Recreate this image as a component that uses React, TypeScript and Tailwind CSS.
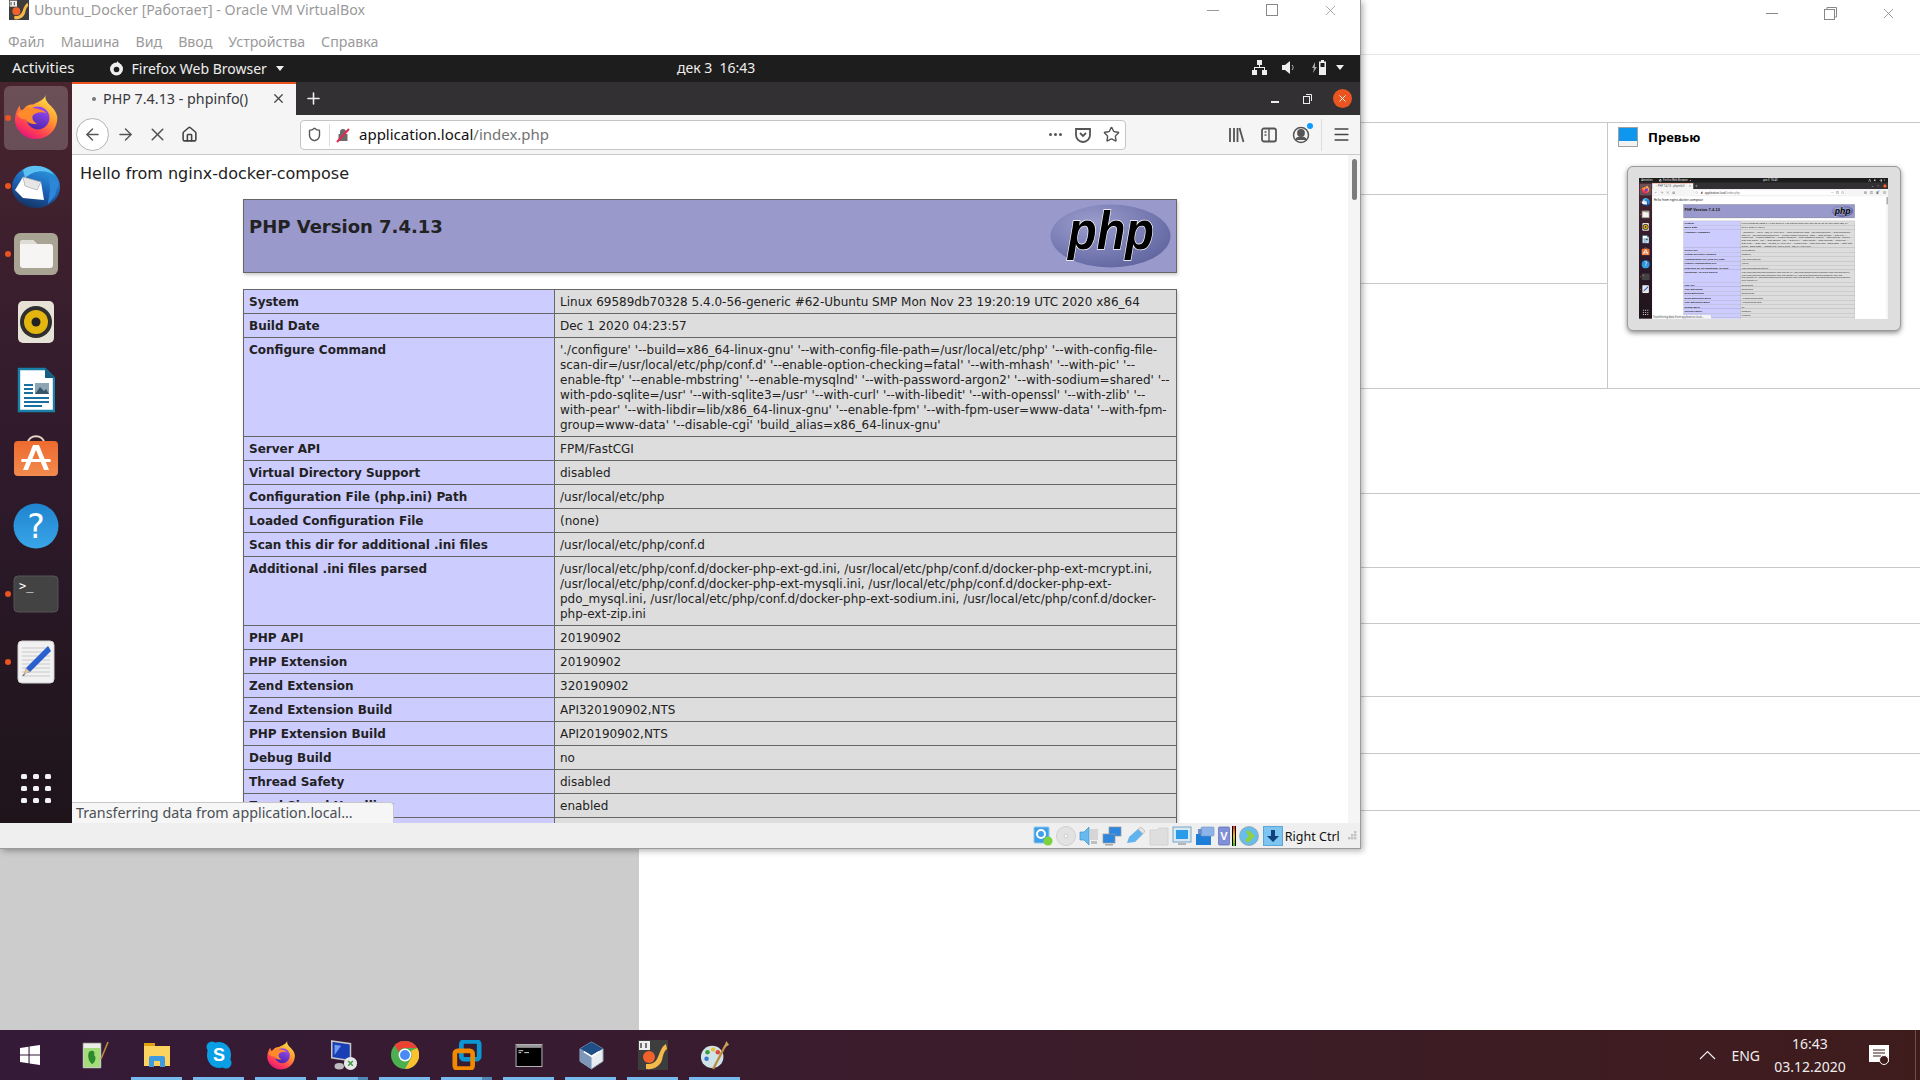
import React from 'react';
import { ArrowLeft, ArrowRight, House, Menu, Plus, Shield, Star, X } from 'lucide-react';

const phpRows: [string, string][] = [
  ['System', 'Linux 69589db70328 5.4.0-56-generic #62-Ubuntu SMP Mon Nov 23 19:20:19 UTC 2020 x86_64'],
  ['Build Date', 'Dec 1 2020 04:23:57'],
  [
    'Configure Command',
    "'./configure' '--build=x86_64-linux-gnu' '--with-config-file-path=/usr/local/etc/php' '--with-config-file-scan-dir=/usr/local/etc/php/conf.d' '--enable-option-checking=fatal' '--with-mhash' '--with-pic' '--enable-ftp' '--enable-mbstring' '--enable-mysqlnd' '--with-password-argon2' '--with-sodium=shared' '--with-pdo-sqlite=/usr' '--with-sqlite3=/usr' '--with-curl' '--with-libedit' '--with-openssl' '--with-zlib' '--with-pear' '--with-libdir=lib/x86_64-linux-gnu' '--enable-fpm' '--with-fpm-user=www-data' '--with-fpm-group=www-data' '--disable-cgi' 'build_alias=x86_64-linux-gnu'",
  ],
  ['Server API', 'FPM/FastCGI'],
  ['Virtual Directory Support', 'disabled'],
  ['Configuration File (php.ini) Path', '/usr/local/etc/php'],
  ['Loaded Configuration File', '(none)'],
  ['Scan this dir for additional .ini files', '/usr/local/etc/php/conf.d'],
  [
    'Additional .ini files parsed',
    '/usr/local/etc/php/conf.d/docker-php-ext-gd.ini, /usr/local/etc/php/conf.d/docker-php-ext-mcrypt.ini, /usr/local/etc/php/conf.d/docker-php-ext-mysqli.ini, /usr/local/etc/php/conf.d/docker-php-ext-pdo_mysql.ini, /usr/local/etc/php/conf.d/docker-php-ext-sodium.ini, /usr/local/etc/php/conf.d/docker-php-ext-zip.ini',
  ],
  ['PHP API', '20190902'],
  ['PHP Extension', '20190902'],
  ['Zend Extension', '320190902'],
  ['Zend Extension Build', 'API320190902,NTS'],
  ['PHP Extension Build', 'API20190902,NTS'],
  ['Debug Build', 'no'],
  ['Thread Safety', 'disabled'],
  ['Zend Signal Handling', 'enabled'],
  ['Zend Memory Manager', 'enabled'],
];

const Firefox = ({ size = 46 }: { size?: number }) => (
  <svg width={size} height={size} viewBox="0 0 48 48">
    <defs>
      <linearGradient id="ffBody" x1="0.8" y1="0.05" x2="0.25" y2="1">
        <stop offset="0" stopColor="#ffe34a" />
        <stop offset="0.38" stopColor="#ff9a2e" />
        <stop offset="0.75" stopColor="#ff3d55" />
        <stop offset="1" stopColor="#e0127f" />
      </linearGradient>
      <linearGradient id="ffGlobe" x1="0.7" y1="0" x2="0.3" y2="1">
        <stop offset="0" stopColor="#9a4cf5" />
        <stop offset="1" stopColor="#4b23a8" />
      </linearGradient>
    </defs>
    <path
      d="M34 1C33 6 36 9 40 13C45 18 47 23 46 28C45 38 36 47 24 47C12 47 2 37 2 27C2 21 4 16 7 12C7 15 8 17 10 18C12 13 16 11 21 11C26 8 32 7 34 1Z"
      fill="url(#ffBody)"
    />
    <circle cx="26" cy="25" r="12" fill="url(#ffGlobe)" />
    <path
      d="M4 21C9 15 17 14 24 15C30 16 33 18 35 20C30 18 24 19 21 22C19 25 21 29 25 31C20 32 15 30 13 26C10 27 7 25 4 21Z"
      fill="#ff8a2b"
    />
  </svg>
);

const Thunderbird = () => (
  <svg className="-mt-[2px]" width="50" height="50" viewBox="0 0 50 50">
    <defs>
      <linearGradient id="tbBody" x1="0.7" y1="0" x2="0.3" y2="1">
        <stop offset="0" stopColor="#2c9be0" />
        <stop offset="0.55" stopColor="#1b5fb4" />
        <stop offset="1" stopColor="#14315f" />
      </linearGradient>
    </defs>
    <ellipse cx="25" cy="27" rx="24" ry="21" fill="url(#tbBody)" />
    <path d="M12 10C20 3 36 5 43 15C36 10 24 9 14 18Z" fill="#5cc0f2" />
    <path d="M4 30L12 17L30 22L33 40L12 38Z" fill="#fff" />
    <path d="M12 17L30 22L26 30L14 26Z" fill="#e6e6e6" stroke="#9a9a9a" strokeWidth="0.6" />
    <path d="M38 16L48 22L44 36L37 44L39 30Z" fill="#2e86d6" />
  </svg>
);

const FilesIcon = () => (
  <svg width="46" height="46" viewBox="0 0 46 46">
    <rect x="1" y="2" width="44" height="42" rx="6" fill="#a8a392" />
    <path d="M7 12a3 3 0 0 1 3-3h10l4 4h13a3 3 0 0 1 3 3v18a3 3 0 0 1-3 3H10a3 3 0 0 1-3-3Z" fill="#f6f5f3" />
    <path d="M7 13a3 3 0 0 1 3-4h10l4 4Z" fill="#dfdcd5" />
  </svg>
);

const Rhythmbox = () => (
  <svg width="38" height="46" viewBox="0 0 38 46">
    <rect x="1" y="2" width="36" height="42" rx="5" fill="#e6e2d6" />
    <circle cx="19" cy="23" r="16" fill="#2f2f2f" />
    <circle cx="19" cy="23" r="12" fill="#e2b50f" />
    <circle cx="19" cy="23" r="4.5" fill="#222" />
  </svg>
);

const Writer = () => (
  <svg width="38" height="46" viewBox="0 0 38 46">
    <path d="M2 2H28L37 11V44H2Z" fill="#fff" stroke="#1a80a8" strokeWidth="2.4" />
    <path d="M28 1V11H38Z" fill="#155f82" />
    <rect x="7" y="17" width="9" height="2" fill="#186fa0" />
    <rect x="7" y="21" width="9" height="2" fill="#186fa0" />
    <rect x="7" y="25" width="9" height="2" fill="#186fa0" />
    <rect x="18" y="16" width="14" height="11" fill="#8da6b6" />
    <path d="M18 27L23 20L27 24L29 22L32 27Z" fill="#3a5566" />
    <rect x="7" y="30" width="25" height="2" fill="#186fa0" />
    <rect x="7" y="34" width="25" height="2" fill="#186fa0" />
    <rect x="7" y="38" width="18" height="2" fill="#186fa0" />
  </svg>
);

const SoftwareIcon = () => (
  <svg className="-mt-[6px]" width="46" height="46" viewBox="0 0 46 46">
    <defs>
      <linearGradient id="swBag" x1="0" y1="0" x2="0" y2="1">
        <stop offset="0" stopColor="#ee6a2e" />
        <stop offset="1" stopColor="#f28a4e" />
      </linearGradient>
    </defs>
    <path d="M15 11C15 2 31 2 31 11" fill="none" stroke="#e9d6c6" strokeWidth="2" />
    <rect x="1" y="9" width="44" height="35" rx="4" fill="url(#swBag)" />
    <path d="M20 13H26L36 38H31L23 18L15 38H10Z" fill="#fff" />
    <rect x="8" y="27" width="30" height="3" rx="1.5" fill="#fff" />
  </svg>
);

const HelpIcon = () => (
  <svg width="46" height="46" viewBox="0 0 46 46">
    <defs>
      <linearGradient id="helpBg" x1="0" y1="0" x2="0" y2="1">
        <stop offset="0" stopColor="#1f83cf" />
        <stop offset="1" stopColor="#3aa6e8" />
      </linearGradient>
    </defs>
    <circle cx="23" cy="23" r="22.5" fill="url(#helpBg)" />
    <text x="23" y="35" textAnchor="middle" fontFamily="'DejaVu Sans',sans-serif" fontSize="33" fill="#fff">
      ?
    </text>
  </svg>
);

const TerminalIcon = () => (
  <svg width="46" height="38" viewBox="0 0 46 38">
    <rect x="1" y="1" width="44" height="36" rx="4" fill="#434343" stroke="#555" />
    <text x="6" y="15" fontFamily="'DejaVu Sans Mono',monospace" fontSize="12" fill="#fff">
      &gt;_
    </text>
  </svg>
);

const Gedit = () => (
  <svg width="38" height="46" viewBox="0 0 38 46">
    <rect x="1" y="2" width="36" height="42" rx="4" fill="#f1f1f1" stroke="#d0d0d0" />
    <g stroke="#c9c9c9" strokeWidth="1">
      <path d="M5 9H33M5 13H33M5 17H33M5 21H33M5 25H33M5 29H33M5 33H33M5 37H33" />
    </g>
    <path d="M31 7L34 12L13 33L7 35L9 29Z" fill="#2a5fd0" />
    <path d="M9 29L13 33L7 35Z" fill="#e6c28c" />
    <path d="M5 37L7 35L8 36Z" fill="#222" />
  </svg>
);

const AppGrid = () => (
  <div className="grid grid-cols-3 gap-x-[6px] gap-y-[7px]">
    {Array.from({ length: 9 }).map((_, i) => (
      <span key={i} className="w-[6px] h-[5px] rounded-[1.5px] bg-[#f2f2f2]" />
    ))}
  </div>
);

const WinLogo = () => (
  <svg width="20" height="20" viewBox="0 0 20 20" fill="#fff">
    <path d="M0 3L8.5 1.8V9.4H0ZM9.6 1.6L20 0V9.4H9.6ZM0 10.6H8.5V18.2L0 17ZM9.6 10.6H20V20L9.6 18.4Z" />
  </svg>
);

const NotepadPP = () => (
  <svg width="28" height="28" viewBox="0 0 28 28">
    <path d="M2 2H20V27H2Z" fill="#e9efe4" stroke="#888" strokeWidth="0.7" />
    <path d="M3 7H19V26H3Z" fill="#a5dc7a" />
    <path d="M8 11C11 8 15 11 13 14C16 16 14 22 11 23C8 21 6 15 8 11Z" fill="#2c8a2c" />
    <path d="M20 18L27 1" stroke="#b98b3a" strokeWidth="1.6" />
  </svg>
);

const FolderIcon = () => (
  <svg width="28" height="24" viewBox="0 0 28 24">
    <path d="M1 0H12V4H1Z" fill="#e0a110" />
    <rect x="1" y="3" width="26" height="20" fill="#fbd35e" />
    <path d="M6 24V15a2 2 0 0 1 2-2H20a2 2 0 0 1 2 2V24H17V18H11V24Z" fill="#3f9be0" />
  </svg>
);

const SkypeIcon = () => (
  <svg width="26" height="28" viewBox="0 0 26 28">
    <ellipse cx="13" cy="14" rx="12" ry="13" fill="#0a9ee5" />
    <circle cx="6" cy="6" r="5.5" fill="#0a9ee5" />
    <circle cx="20" cy="22" r="5.5" fill="#0a9ee5" />
    <text x="13" y="20" textAnchor="middle" fontFamily="'Liberation Sans',sans-serif" fontWeight="700" fontSize="18" fill="#fff">
      S
    </text>
  </svg>
);

const RdpIcon = () => (
  <svg width="30" height="30" viewBox="0 0 32 32">
    <path d="M4 1L24 4V22L4 19Z" fill="#1a3fb5" stroke="#c8c8c8" strokeWidth="1.6" />
    <path d="M7 5L14 6L7 16Z" fill="#6f9df0" />
    <circle cx="24" cy="25" r="7" fill="#e8e8e8" />
    <ellipse cx="12" cy="28" rx="5" ry="3.5" fill="#bdbdbd" />
    <path d="M21.5 22.5L26.5 27.5M26.5 22.5L21.5 27.5" stroke="#3f9b3f" strokeWidth="1.6" />
  </svg>
);

const ChromeIcon = () => (
  <svg width="28" height="28" viewBox="0 0 48 48">
    <circle cx="24" cy="24" r="24" fill="#4caf50" />
    <path d="M24 0A24 24 0 0 1 45 12H24A12 12 0 0 0 13 19L6 7A24 24 0 0 1 24 0Z" fill="#ea4335" />
    <path d="M45 12A24 24 0 0 1 24 48L34 30A12 12 0 0 0 34 17Z" fill="#fbc02d" />
    <circle cx="24" cy="24" r="11" fill="#fff" />
    <circle cx="24" cy="24" r="8.5" fill="#4a8af4" />
  </svg>
);

const VmwareIcon = () => (
  <svg width="30" height="30" viewBox="0 0 30 32" fill="none">
    <rect x="9" y="1.5" width="19" height="19" rx="3" stroke="#0c97d2" strokeWidth="5" />
    <rect x="2" y="11.5" width="19" height="19" rx="3" stroke="#ef8a00" strokeWidth="5" />
  </svg>
);

const CmdIcon = () => (
  <svg width="28" height="23" viewBox="0 0 28 24">
    <rect x="0.5" y="0.5" width="27" height="23" fill="#000" stroke="#bbb" />
    <rect x="1" y="1" width="26" height="3" fill="#9a9a9a" />
    <path d="M3 7H8M3 9H6M9 9H14" stroke="#ddd" strokeWidth="1" />
  </svg>
);

const VBoxCube = () => (
  <svg width="25" height="29" viewBox="0 0 26 30">
    <path d="M13 1L25 8V21L13 29L1 21V8Z" fill="#e9edf2" stroke="#8ea1b7" />
    <path d="M13 1L25 8L13 15L1 8Z" fill="#1f4f86" />
    <path d="M13 15V29L1 21V8Z" fill="#7d97b8" />
    <path d="M5 11L13 16L21 11" stroke="#fff" strokeWidth="1.6" fill="none" />
  </svg>
);

const VBoxApp = ({ size = 30 }: { size?: number }) => (
  <svg width={size} height={size} viewBox="0 0 30 30">
    <rect width="30" height="30" fill="#3d3d3d" />
    <rect x="1" y="1" width="11" height="9" fill="#eee" />
    <path d="M3 8V3M8 8V3" stroke="#222" strokeWidth="1.2" />
    <circle cx="11" cy="17" r="6" fill="#f0622a" />
    <path d="M28 4C22 8 22 14 19 19C16 24 12 24 8 24V29C16 30 22 26 24 20C25 15 26 11 29 9Z" fill="#f7b84a" />
  </svg>
);

const PaletteIcon = () => (
  <svg width="30" height="30" viewBox="0 0 32 32">
    <ellipse cx="13" cy="18" rx="12" ry="12" fill="#cfe3e8" />
    <circle cx="8" cy="13" r="2.4" fill="#3f9b3f" />
    <circle cx="14" cy="10" r="2.4" fill="#e8c33a" />
    <circle cx="7" cy="20" r="2.4" fill="#3a78d0" />
    <circle cx="19" cy="13" r="2.4" fill="#d9483a" />
    <path d="M14 31L27 6" stroke="#b98b3a" strokeWidth="2.4" />
    <path d="M25 9L28 1L31 5Z" fill="#c9a35a" />
  </svg>
);

const PhpLogo = () => (
  <svg width="121" height="64" viewBox="0 0 121 64">
    <defs>
      <radialGradient id="phpOval" cx="0.35" cy="0.3" r="0.85">
        <stop offset="0" stopColor="#9a9dcc" />
        <stop offset="0.6" stopColor="#7478b0" />
        <stop offset="1" stopColor="#5b5f9a" />
      </radialGradient>
    </defs>
    <ellipse cx="60.5" cy="32" rx="60" ry="31.5" fill="url(#phpOval)" />
    <text
      x="61"
      y="45"
      textAnchor="middle"
      textLength="86"
      lengthAdjust="spacingAndGlyphs"
      fontFamily="'Liberation Sans',sans-serif"
      fontWeight="700"
      fontStyle="italic"
      fontSize="54"
      fill="#000"
      stroke="#fff"
      strokeWidth="1.4"
      paintOrder="stroke"
    >
      php
    </text>
  </svg>
);

const SlashedLock = () => (
  <svg width="16" height="16" viewBox="0 0 16 16">
    <path d="M5 7V5a3 3 0 0 1 6 0v2h1.5v7h-9V7Z" fill="#6a6a6a" />
    <path d="M2 15L14 2" stroke="#e22850" strokeWidth="2" />
  </svg>
);

const ToolGlyph = ({ children }: { children: React.ReactNode }) => (
  <svg width="18" height="18" viewBox="0 0 18 18" fill="none" stroke="#555" strokeWidth="1.8">
    {children}
  </svg>
);

const DockItem = ({ running, active, children }: { running?: boolean; active?: boolean; children: React.ReactNode }) => (
  <div className="relative h-[68px] flex items-center justify-center">
    {active && <div className="absolute left-1 right-1 top-[2px] bottom-[2px] rounded-md bg-white/20" />}
    {running && <span className="absolute left-[5px] top-1/2 -mt-[3px] w-[6px] h-[6px] rounded-full bg-[#e95420]" />}
    <div className="relative flex">{children}</div>
  </div>
);

const PhpInfoPage = () => (
  <div className="relative flex-1 flex min-h-0 bg-white font-['DejaVu_Sans',sans-serif] text-[#222]">
    <div className="flex-1 min-w-0 overflow-hidden">
      <p className="pl-2 pt-[9px] text-[16px] leading-[19px] text-[#222]">Hello from nginx-docker-compose</p>
      <div className="mx-auto mt-[16px] w-[934px] h-[74px] flex justify-between border border-[#666] bg-[#9999cc] shadow-[1px_2px_3px_#ccc]">
        <h1 className="pl-[5px] pt-[16px] text-[18px] leading-[22px] font-bold text-[#222]">PHP Version 7.4.13</h1>
        <div className="pt-[4px] pr-[5px]">
          <PhpLogo />
        </div>
      </div>
      <table className="ml-[171px] mt-[16px] w-[933px] table-fixed border-collapse shadow-[1px_2px_3px_#ccc] text-[12px] leading-[15px]">
        <colgroup>
          <col className="w-[311px]" />
          <col className="w-[622px]" />
        </colgroup>
        <tbody>
          {phpRows.map(([name, value]) => (
            <tr key={name}>
              <td className="align-top border border-[#666] bg-[#ccccff] pl-[5px] pr-[5px] pt-[5px] pb-[3px] font-bold">{name}</td>
              <td className="align-top border border-[#666] bg-[#dddddd] pl-[5px] pr-[5px] pt-[5px] pb-[3px] break-words">{value}</td>
            </tr>
          ))}
        </tbody>
      </table>
    </div>
    <div className="w-[12px] bg-[#f5f5f5] flex justify-center pt-[4px]">
      <span className="block w-[5px] h-[41px] rounded-full bg-[#7c7c7c]" />
    </div>
    <div className="absolute left-0 bottom-0 w-[322px] h-[21px] rounded-tr-[4px] border-t border-r border-[#c8c8c8] bg-[#f6f6f6] pl-[4px] font-['Noto_Sans',sans-serif] text-[14.3px] leading-[19px] text-[#4a4f55] whitespace-nowrap">
      Transferring data from application.local…
    </div>
  </div>
);

const FirefoxWindow = () => (
  <div className="flex-1 min-w-0 flex flex-col font-['Noto_Sans',sans-serif]">
    <div className="h-[33px] bg-[#323033] flex items-stretch">
      <div className="w-[224px] bg-[#f5f5f5] border-t-2 border-[#e95420] flex items-center pl-[20px] pb-[2px] text-[14.3px] text-[#38383d]">
        <span className="w-[4px] h-[4px] rounded-full bg-[#777] mr-[7px]" />
        <span className="whitespace-nowrap">PHP 7.4.13 - phpinfo()</span>
        <X className="ml-auto mr-[10px] text-[#444]" size={15} strokeWidth={2} />
      </div>
      <div className="w-[34px] flex items-center justify-center">
        <Plus className="text-[#eee]" size={19} strokeWidth={2} />
      </div>
      <div className="ml-auto flex items-center pr-[8px]">
        <span className="w-[33px] flex justify-center pt-[6px]">
          <span className="block w-[8px] h-[2px] bg-[#eee]" />
        </span>
        <span className="w-[33px] mr-[9px] flex justify-center">
          <svg width="9" height="10" viewBox="0 0 9 10" fill="none" stroke="#eee">
            <rect x="0.5" y="2.5" width="6" height="7" />
            <path d="M3 0.5H8.5V7" />
          </svg>
        </span>
        <span className="w-[19px] h-[19px] rounded-full bg-[#e95420] flex items-center justify-center">
          <X className="text-white" size={11} strokeWidth={2} />
        </span>
      </div>
    </div>
    <div className="h-[40px] bg-[#f5f5f5] border-b border-[#c9c9c9] flex items-center pl-[4px]">
      <span className="w-[33px] h-[33px] rounded-full border border-[#b3b3b3] bg-white flex items-center justify-center">
        <ArrowLeft className="text-[#555]" size={19} strokeWidth={1.8} />
      </span>
      <span className="w-[32px] flex justify-center">
        <ArrowRight className="text-[#555]" size={19} strokeWidth={1.8} />
      </span>
      <span className="w-[32px] flex justify-center">
        <X className="text-[#555]" size={21} strokeWidth={1.8} />
      </span>
      <span className="w-[32px] flex justify-center">
        <House className="text-[#444]" size={17} strokeWidth={2.2} />
      </span>
      <div className="ml-[95px] w-[826px] h-[30px] rounded-[4px] border border-[#c4c4c4] bg-white flex items-center text-[15px]">
        <Shield className="ml-[6px] text-[#555]" size={15} strokeWidth={2.2} />
        <span className="ml-[7px] mr-[5px] h-[22px] w-px bg-[#ddd]" />
        <SlashedLock />
        <span className="ml-[8px] text-[#111] whitespace-nowrap">application.local</span>
        <span className="text-[#737373] whitespace-nowrap">/index.php</span>
        <div className="ml-auto flex items-center pr-[5px]">
          <span className="flex gap-[2px] mr-[12px]">
            <span className="w-[3px] h-[3px] rounded-full bg-[#555]" />
            <span className="w-[3px] h-[3px] rounded-full bg-[#555]" />
            <span className="w-[3px] h-[3px] rounded-full bg-[#555]" />
          </span>
          <ToolGlyph>
            <path d="M2 3H16V9A7 7 0 0 1 2 9Z" />
            <path d="M6 7L9 10L12 7" />
          </ToolGlyph>
          <Star className="ml-[11px] text-[#555]" size={17} strokeWidth={2} />
        </div>
      </div>
      <div className="ml-[101px] flex items-center gap-[14.5px]">
        <ToolGlyph>
          <path d="M3 2V16M7 2V16M10.5 2V16M12.5 2L16.5 16" />
        </ToolGlyph>
        <ToolGlyph>
          <rect x="2" y="2.5" width="14" height="13" rx="2" />
          <path d="M9 3V15M4.5 6H6.5M4.5 9H6.5" strokeWidth="1.4" />
        </ToolGlyph>
        <div className="relative">
          <ToolGlyph>
            <circle cx="9" cy="9" r="7.5" strokeWidth="1.5" />
            <circle cx="9" cy="7" r="3" fill="#555" />
            <path d="M4 14C5 10.5 13 10.5 14 14" fill="#555" />
          </ToolGlyph>
          <span className="absolute -right-[3px] -top-[3px] w-[6px] h-[6px] rounded-full bg-[#0a9dff]" />
        </div>
        <span className="h-[32px] w-px bg-[#ddd] -ml-[4px]" />
        <Menu className="text-[#444] -ml-[4px]" size={19} strokeWidth={2} />
      </div>
    </div>
    <PhpInfoPage />
  </div>
);

// 1360x768 guest desktop, reused scaled down for the preview card
const GuestScreen = () => (
  <div className="w-[1360px] h-[768px] flex flex-col bg-white">
    <div className="h-[27px] shrink-0 bg-[#1d1d1d] pb-[2px] flex items-center text-[#eee] font-['Noto_Sans',sans-serif] relative">
      <span className="ml-[12px] text-[15px]">Activities</span>
      <span className="ml-[34px] pt-[1px] flex items-center gap-[8px] text-[14px]">
        <svg width="15" height="15" viewBox="0 0 15 15">
          <circle cx="7.5" cy="8" r="6.5" fill="#eee" />
          <circle cx="7.5" cy="8.5" r="2.8" fill="#1d1d1d" />
          <path d="M8 0L12 4L8 5Z" fill="#eee" />
        </svg>
        Firefox Web Browser
        <span className="ml-[1px] w-0 h-0 border-x-[4.5px] border-x-transparent border-t-[5px] border-t-[#eee]" />
      </span>
      <span className="absolute left-[677px] text-[14px] whitespace-pre">дек 3  16:43</span>
      <div className="ml-auto flex items-center gap-[15px] pr-[16px]">
        <svg width="15" height="15" viewBox="0 0 15 15" fill="#eee">
          <rect x="5" y="0" width="5" height="5" />
          <rect x="0" y="10" width="5" height="5" />
          <rect x="10" y="10" width="5" height="5" />
          <path d="M7 5H8V7H13V10H12V8H3V10H2V7H7Z" />
        </svg>
        <svg width="15" height="15" viewBox="0 0 15 15" fill="#eee">
          <path d="M0 5H3L8 1V14L3 10H0Z" />
          <path d="M10 5C11.5 6.5 11.5 8.5 10 10" stroke="#bbb" fill="none" />
        </svg>
        <svg width="16" height="17" viewBox="0 0 16 17" fill="#eee">
          <path d="M3 3L0 9H2L1 14L5 8H3Z" fill="#aaa" />
          <path d="M9 1H12V2.5H14V16H7V2.5H9Z" />
          <rect x="8.5" y="4" width="4" height="4" fill="#1d1d1d" />
        </svg>
        <span className="-ml-[7px] w-0 h-0 border-x-[4.5px] border-x-transparent border-t-[5px] border-t-[#eee]" />
      </div>
    </div>
    <div className="flex-1 min-h-0 flex">
      <div className="w-[72px] shrink-0 flex flex-col bg-gradient-to-b from-[#48242e] via-[#2f1a2c] to-[#1e141a]">
        <div className="pt-[2px] flex flex-col">
          <DockItem running active>
            <div className="-mt-[3px]">
              <Firefox />
            </div>
          </DockItem>
          <DockItem running>
            <Thunderbird />
          </DockItem>
          <DockItem running>
            <FilesIcon />
          </DockItem>
          <DockItem>
            <Rhythmbox />
          </DockItem>
          <DockItem>
            <Writer />
          </DockItem>
          <DockItem>
            <SoftwareIcon />
          </DockItem>
          <DockItem>
            <HelpIcon />
          </DockItem>
          <DockItem running>
            <TerminalIcon />
          </DockItem>
          <DockItem running>
            <Gedit />
          </DockItem>
        </div>
        <div className="mt-auto mb-[20px] flex justify-center">
          <AppGrid />
        </div>
      </div>
      <FirefoxWindow />
    </div>
  </div>
);

const StatusIcon = ({ children }: { children: React.ReactNode }) => (
  <svg width="20" height="20" viewBox="0 0 20 20">
    {children}
  </svg>
);

const VBoxStatusBar = () => (
  <div className="h-[25px] bg-[#efefef] flex items-center justify-end gap-[3.2px] text-[12.5px] text-[#111] font-['Noto_Sans',sans-serif] shrink-0 pr-[3px]">
    <StatusIcon>
      <rect x="1" y="1" width="15" height="16" rx="1" fill="#3f9fe8" stroke="#8fc4ee" />
      <circle cx="8" cy="8" r="4" fill="none" stroke="#fff" strokeWidth="2" />
      <circle cx="15" cy="15" r="4.5" fill="#7cd23c" />
    </StatusIcon>
    <StatusIcon>
      <circle cx="10" cy="10" r="9.5" fill="#e2e2e2" stroke="#d0d0d0" />
      <circle cx="10" cy="10" r="2" fill="#f5f5f5" stroke="#ccc" />
    </StatusIcon>
    <StatusIcon>
      <path d="M1 6H5L10 1V19L5 14H1Z" fill="#68b9ee" stroke="#3f93cf" strokeWidth="0.7" />
      <rect x="11" y="3" width="8" height="11" fill="#d5d5d5" />
      <rect x="12" y="15" width="6" height="3" fill="#c0c0c0" />
    </StatusIcon>
    <StatusIcon>
      <rect x="7" y="1" width="12" height="9" fill="#2f86dd" stroke="#999" strokeWidth="0.7" />
      <rect x="1" y="8" width="12" height="9" fill="#2f86dd" stroke="#999" strokeWidth="0.7" />
      <rect x="3" y="18" width="8" height="1.5" fill="#aaa" />
    </StatusIcon>
    <StatusIcon>
      <path d="M1 17L3 11L12 3L17 8L9 16Z" fill="#63b4ec" />
      <path d="M12 3L15 1L19 5L17 8Z" fill="#e4e4e4" stroke="#aaa" strokeWidth="0.6" />
    </StatusIcon>
    <StatusIcon>
      <path d="M1 4H8L10 2H19V19H1Z" fill="#dedede" stroke="#d2d2d2" />
    </StatusIcon>
    <StatusIcon>
      <rect x="1" y="1" width="18" height="15" fill="#d8e8f3" stroke="#7ba5c6" />
      <rect x="4" y="4" width="12" height="9" fill="#2a9be8" />
      <rect x="6" y="17" width="8" height="2" fill="#b5b5b5" />
    </StatusIcon>
    <StatusIcon>
      <rect x="1" y="8" width="15" height="11" fill="#1f7fd8" />
      <rect x="6" y="1" width="13" height="9" rx="1" fill="#8db4ea" stroke="#7a94bf" strokeWidth="0.6" />
      <rect x="3" y="3" width="4" height="5" fill="#6b8ec4" />
    </StatusIcon>
    <div className="flex items-center gap-[2px]">
      <svg width="12" height="20" viewBox="0 0 12 20">
        <rect x="0.5" y="1" width="11" height="18" rx="1" fill="#7f8fd8" stroke="#5c6cb5" strokeWidth="0.7" />
        <text x="6" y="14" textAnchor="middle" fontFamily="'Liberation Sans',sans-serif" fontWeight="700" fontSize="11" fill="#fff">
          V
        </text>
      </svg>
      <span className="w-[4px] h-[20px] bg-gradient-to-b from-[#e02020] via-[#e8c020] to-[#20c020] border-x border-black" />
    </div>
    <StatusIcon>
      <circle cx="10" cy="10" r="9.5" fill="#68bdea" stroke="#888" strokeWidth="0.5" />
      <path d="M9 4L16 10L9 17L6 14L10 10L7 6Z" fill="#8ed13c" />
    </StatusIcon>
    <div className="w-[20px] h-[20px] bg-[#7cc4f2] border border-[#5ea6d6] flex items-center justify-center">
      <svg width="12" height="12" viewBox="0 0 12 12" fill="#12407a">
        <path d="M4 0H8V6H12L6 12L0 6H4Z" />
      </svg>
    </div>
    <span className="-ml-[1px] mt-[3px] whitespace-nowrap">Right Ctrl</span>
    <svg className="ml-[5px]" width="9" height="9" viewBox="0 0 9 9" fill="#c2c2c2">
      <rect x="6" y="0" width="2.4" height="2.4" />
      <rect x="3" y="3" width="2.4" height="2.4" />
      <rect x="6" y="3" width="2.4" height="2.4" />
      <rect x="0" y="6" width="2.4" height="2.4" />
      <rect x="3" y="6" width="2.4" height="2.4" />
      <rect x="6" y="6" width="2.4" height="2.4" />
    </svg>
  </div>
);

const VirtualBoxWindow = () => (
  <div className="absolute left-0 top-0 w-[1361px] h-[849px] flex flex-col bg-white border-r border-b border-[#9a9a9a] shadow-[2px_2px_6px_rgba(0,0,0,0.3)]">
    <div className="h-[27px] shrink-0 flex items-start font-['Noto_Sans',sans-serif] text-[#9a9a9a]">
      <div className="ml-[9px]">
        <VBoxApp size={20} />
      </div>
      <span className="ml-[5px] text-[14.2px] leading-[20px] whitespace-nowrap">Ubuntu_Docker [Работает] - Oracle VM VirtualBox</span>
      <div className="ml-auto flex items-start text-[#8a8a8a]">
        <span className="w-[59px] h-[20px] flex items-center justify-center">
          <span className="block w-[12px] h-px bg-[#999]" />
        </span>
        <span className="w-[59px] h-[20px] flex items-center justify-center">
          <span className="block w-[12px] h-[12px] border border-[#888]" />
        </span>
        <span className="w-[59px] h-[20px] flex items-center justify-center">
          <X size={17} strokeWidth={1} />
        </span>
      </div>
    </div>
    <div className="h-[28px] shrink-0 flex items-center gap-[16px] pl-[8px] pt-[2px] font-['Noto_Sans',sans-serif] text-[14.2px] text-[#9a9a9a]">
      <span>Файл</span>
      <span>Машина</span>
      <span>Вид</span>
      <span>Ввод</span>
      <span>Устройства</span>
      <span>Справка</span>
    </div>
    <GuestScreen />
    <VBoxStatusBar />
  </div>
);

const PreviewPane = () => (
  <div className="w-[313px] border-l border-[#c8c8c8] pl-[10px]">
    <div className="flex items-center pt-[4px] h-[24px]">
      <svg width="20" height="20" viewBox="0 0 20 20">
        <rect x="0.5" y="0.5" width="19" height="19" fill="#f2f2f2" stroke="#a0a0a0" />
        <rect x="1" y="1" width="18" height="13" fill="#0f97f0" />
      </svg>
      <span className="ml-[10px] mt-[1px] font-['Noto_Sans',sans-serif] text-[13px] font-bold text-black">Превью</span>
    </div>
    <div className="mt-[19px] ml-[9px] w-[274px] h-[165px] rounded-[6px] border border-[#9a9a9a] bg-[#dedede] shadow-[0_2px_5px_rgba(0,0,0,0.45)] pt-[11px] pl-[11px]">
      <div className="w-[249px] h-[141px] overflow-hidden">
        <div className="scale-[0.1832] origin-top-left">
          <GuestScreen />
        </div>
      </div>
    </div>
  </div>
);

const BackWindow = () => (
  <div className="flex-1 min-w-0 bg-white flex flex-col">
    <div className="h-[55px] border-b border-[#e6e6e6] flex justify-end items-start pr-[3px]">
      <span className="w-[58px] h-[27px] flex items-center justify-center">
        <span className="block w-[12px] h-px bg-[#888]" />
      </span>
      <span className="w-[58px] h-[27px] flex items-center justify-center">
        <svg width="13" height="13" viewBox="0 0 13 13" fill="none" stroke="#888">
          <rect x="0.5" y="2.5" width="10" height="10" />
          <path d="M3 2.5V0.5H12.5V10H10.5" />
        </svg>
      </span>
      <span className="w-[58px] h-[27px] flex items-center justify-center text-[#777]">
        <X size={17} strokeWidth={1} />
      </span>
    </div>
    <div className="h-[68px] border-b border-[#c8c8c8]" />
    <div className="h-[266px] border-b border-[#c8c8c8] flex">
      <div className="flex-1 flex flex-col">
        <div className="h-[72px] border-b border-[#c8c8c8]" />
        <div className="h-[89px] border-b border-[#c8c8c8]" />
      </div>
      <PreviewPane />
    </div>
    <div className="h-[105px] border-b border-[#c8c8c8]" />
    <div className="h-[74px] border-b border-[#c8c8c8]" />
    <div className="h-[56px] border-b border-[#c8c8c8]" />
    <div className="h-[73px] border-b border-[#c8c8c8]" />
    <div className="h-[57px] border-b border-[#c8c8c8]" />
    <div className="h-[57px] border-b border-[#c8c8c8]" />
  </div>
);

const TaskItem = ({ open, split, children }: { open?: boolean; split?: boolean; children: React.ReactNode }) => (
  <div className="relative w-[62px] h-full flex items-center justify-center">
    {children}
    {open && (
      <span className="absolute bottom-0 left-[5px] right-[6px] h-[3px] bg-[#76b9ed]">
        {split && <span className="absolute right-0 top-0 h-full w-[10px] bg-[#4f86b3]" />}
      </span>
    )}
  </div>
);

const Taskbar = () => (
  <div className="h-[50px] shrink-0 flex items-stretch bg-gradient-to-r from-[#351a38] to-[#3f1c1c] font-['Noto_Sans',sans-serif] text-[#eee]">
    <div className="w-[64px] pr-[4px] flex items-center justify-center">
      <WinLogo />
    </div>
    <div className="flex items-stretch">
      <TaskItem>
        <NotepadPP />
      </TaskItem>
      <TaskItem open>
        <FolderIcon />
      </TaskItem>
      <TaskItem open>
        <SkypeIcon />
      </TaskItem>
      <TaskItem open>
        <Firefox size={30} />
      </TaskItem>
      <TaskItem open split>
        <RdpIcon />
      </TaskItem>
      <TaskItem open>
        <ChromeIcon />
      </TaskItem>
      <TaskItem open split>
        <VmwareIcon />
      </TaskItem>
      <TaskItem open>
        <CmdIcon />
      </TaskItem>
      <TaskItem open>
        <VBoxCube />
      </TaskItem>
      <TaskItem open>
        <VBoxApp />
      </TaskItem>
      <TaskItem open>
        <PaletteIcon />
      </TaskItem>
    </div>
    <div className="ml-auto flex items-center">
      <svg width="17" height="10" viewBox="0 0 17 10" fill="none" stroke="#eee" strokeWidth="1.2">
        <path d="M1 9L8.5 1.5L16 9" />
      </svg>
      <span className="ml-[15px] text-[14px]">ENG</span>
      <div className="ml-[14px] w-[72px] flex flex-col items-center text-[14px] leading-[23px]">
        <span>16:43</span>
        <span>03.12.2020</span>
      </div>
      <svg className="ml-[23px]" width="21" height="20" viewBox="0 0 21 20">
        <path d="M0 0H20V17H0Z" fill="#fff" />
        <path d="M4 5H16M4 8H16M4 11H12" stroke="#3f1c1c" strokeWidth="1" />
        <circle cx="15" cy="15" r="4.5" fill="#3f1c1c" stroke="#fff" />
      </svg>
      <span className="ml-[25px] h-full w-px bg-[#6a5050]" />
      <span className="w-[4px]" />
    </div>
  </div>
);

export default function App() {
  return (
    <div className="relative w-[1920px] h-[1080px] overflow-hidden flex flex-col bg-white">
      <div className="flex-1 min-h-0 flex">
        <div className="w-[639px] bg-[#cccccc]" />
        <BackWindow />
      </div>
      <Taskbar />
      <VirtualBoxWindow />
    </div>
  );
}
